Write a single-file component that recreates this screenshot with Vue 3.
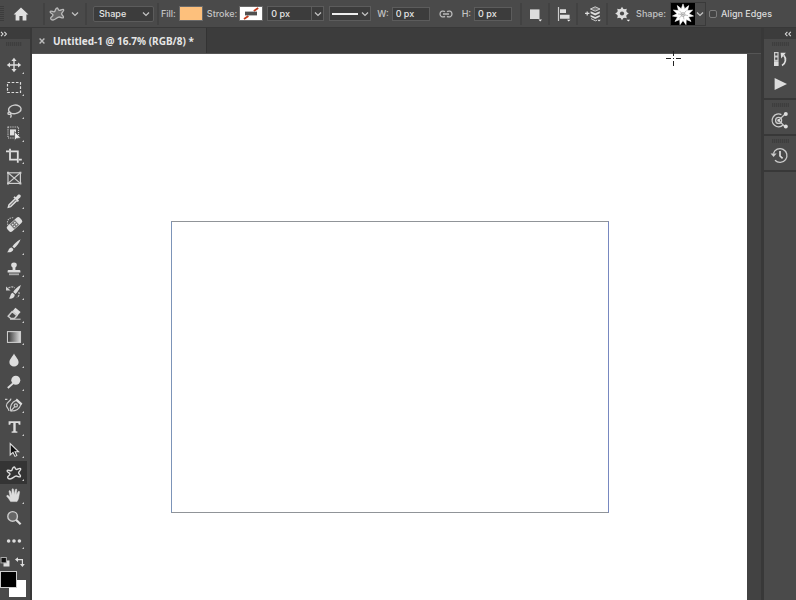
<script setup>
import { ref } from 'vue'

const burst = (cx, cy, n, outer, inner) => {
  const pts = []
  for (let i = 0; i < n * 2; i++) {
    const r = i % 2 ? inner : outer
    const a = (Math.PI * i) / n - Math.PI / 2
    pts.push(`${(cx + r * Math.cos(a)).toFixed(2)},${(cy + r * Math.sin(a)).toFixed(2)}`)
  }
  return pts.join(' ')
}

const blob = 'M5.8 5.4 C6.6 3.4 6.8 1.8 8.2 2 C9.4 2.2 9 4 10.2 4.4 C11.6 4.8 13.4 2.6 14.6 3.6 C15.6 4.8 12.6 6.4 12.6 7.8 C12.6 9.2 15.2 10.2 14.4 11.6 C13.6 12.8 11.6 10.8 10 11 C8 11.2 6.6 14 4 14 C1.4 14 1 12 2.6 10.8 C3.8 9.8 4.4 9 3.6 8.2 C2.8 7.4 .6 7 1.2 5.6 C1.8 4.2 5 6.8 5.8 5.4 Z'

const tools = [
  { name: 'Move', more: true, body: '<g stroke="#ddd" stroke-width="1.4" fill="none"><path d="M8 3V13M3 8H13"/></g><g fill="#ddd"><path d="M8 .8 10.6 4H5.4ZM8 15.2 10.6 12H5.4ZM.8 8 4 5.4V10.6ZM15.2 8 12 5.4V10.6Z"/></g>' },
  { name: 'Marquee', more: true, body: '<rect x="1.5" y="2.5" width="13" height="10" fill="none" stroke="#ddd" stroke-width="1.2" stroke-dasharray="2.6 1.6"/>' },
  { name: 'Lasso', more: true, body: '<g fill="none" stroke="#ccc" stroke-width="1.4"><ellipse cx="8.8" cy="6.4" rx="6.3" ry="4.3" transform="rotate(-8 8.8 6.4)"/><path d="M3.4 9C1.4 9.4 1.6 11.6 3.4 11.4 5.2 11.2 5 9.4 3.4 9M4.4 11.2C5.6 12 5.2 13.6 4.4 14.6"/></g>' },
  { name: 'Object Selection', more: true, body: '<rect x="2" y="2" width="10.5" height="11" fill="none" stroke="#ccc" stroke-width="1.1" stroke-dasharray="1.2 1"/><rect x="4" y="4.4" width="6" height="6" fill="#ddd"/><path d="M8.6 6.6V15.4L10.6 13.4 14.8 13Z" fill="#eee" stroke="#4a4a4a" stroke-width=".7"/>' },
  { name: 'Crop', more: true, body: '<g fill="none" stroke="#ddd" stroke-width="1.8"><path d="M4 .8V11.6H12M0 3.4H3M5 3.4H11.8V14.8M13 11.6H15.8"/></g>' },
  { name: 'Frame', more: false, body: '<g fill="none" stroke="#ccc" stroke-width="1.2"><rect x="2" y="2.8" width="12.4" height="10.6"/><path d="M2 2.8 14.4 13.4M14.4 2.8 2 13.4"/></g><g fill="#ccc"><path d="M1 1.8h2v2H1zM13.4 1.8h2v2h-2zM1 12.4h2v2H1zM13.4 12.4h2v2h-2z"/></g>' },
  { name: 'Eyedropper', more: true, body: '<path d="M9 6 3 12 2.4 14.2 4.6 13.6 10.6 7.6" fill="none" stroke="#ddd" stroke-width="1.5"/><path d="M7.4 4.4 8.6 3.2 9.8 4.2 12 1.8C13.8.6 15.6 2.4 14.4 4.2L12 6.6 13 7.8 11.8 9Z" fill="#ddd"/>' },
  { name: 'Healing Brush', more: true, body: '<path d="M2 9C-.2 4 4.4.6 8 2" fill="none" stroke="#bbb" stroke-width="1.1" stroke-dasharray="1.4 1"/><g transform="rotate(-42 8.5 8.5)"><rect x="0" y="4.9" width="17" height="7.2" rx="2.4" fill="#ddd"/><rect x="5.2" y="5.4" width="6.6" height="6.2" fill="#777"/><path d="M6.4 6.8h1.4v1.2H6.4zM9.2 6.8h1.4v1.2H9.2zM6.4 9.2h1.4v1.2H6.4zM9.2 9.2h1.4v1.2H9.2z" fill="#eee"/></g>' },
  { name: 'Brush', more: true, body: '<path d="M14.6 1.2C11.4 2.8 7.6 6.4 6.4 8.6L8.2 10.2C10.6 8.2 13.6 4.6 14.6 1.2Z" fill="#ddd"/><path d="M5.6 9.4 7.4 11C7.2 13.6 4 14.8 1 14.2 2.8 13.2 2.4 9.6 5.6 9.4Z" fill="#ddd"/>' },
  { name: 'Clone Stamp', more: true, body: '<path d="M8 1.6C11.6 1.6 11.4 5.4 9.4 6.6V9H13.4Q14.4 9 14.4 10V11.6H1.6V10Q1.6 9 2.6 9H6.6V6.6C4.6 5.4 4.4 1.6 8 1.6Z" fill="#ddd"/><rect x="3" y="12.4" width="10" height="1.8" fill="#aaa"/>' },
  { name: 'History Brush', more: true, body: '<path d="M14.8 1C11.4 2.6 8.8 5.6 7.2 8L9.6 10C12 7.4 14.2 4.6 14.8 1ZM6.6 8.8 8.8 10.8C8.6 14 6 15 2.8 14.6 4.8 13 4 9.8 6.6 8.8Z" fill="#ddd"/><path d="M0 2.4 4.6 6.6H0Z" fill="#ccc"/><path d="M2.4 4C5 2.4 7.4 2.6 8.6 4M12.8 8C13.8 10.4 12.6 12.6 10.8 13.6" fill="none" stroke="#bbb" stroke-width="1.2" stroke-dasharray="2 1"/>' },
  { name: 'Eraser', more: true, body: '<path d="M9.4 1.8 14.6 6 11.6 9.4 6.4 5.2Z" fill="#ddd"/><path d="M6.2 5.6 11 9.6 8.4 12.6H5L2.2 10.2Z" fill="none" stroke="#ccc" stroke-width="1.5"/><path d="M4 13.2H14.6" stroke="#ccc" stroke-width="1.1"/>' },
  { name: 'Gradient', more: true, body: '<defs><linearGradient id="ramp"><stop offset="0" stop-color="#333"/><stop offset="1" stop-color="#ddd"/></linearGradient></defs><rect x="1.5" y="2.6" width="13" height="10.8" fill="url(#ramp)" stroke="#ccc" stroke-width="1.1"/>' },
  { name: 'Blur', more: true, body: '<path d="M8 1.4C9.4 4.6 12.6 7 12.6 10.2A4.6 4.4 0 0 1 3.4 10.2C3.4 7 6.6 4.6 8 1.4Z" fill="#ddd"/>' },
  { name: 'Dodge', more: true, body: '<circle cx="9.8" cy="6.2" r="4.5" fill="#ddd"/><path d="M7 9.4 1.8 14" stroke="#ddd" stroke-width="1.9"/>' },
  { name: 'Curvature Pen', more: true, body: '<g fill="none" stroke="#ccc" stroke-width="1.2"><path d="M-1 2.4H1.4M5 1.6C4.6 4.6-.2 5.4.4 8.6.8 11 2.8 11.4 3 14"/><path d="M4.8 14C3.4 9.6 5.8 4.8 10.2 3.4L14.8 7.6C13.6 11.4 10 14.2 4.8 14Z"/><path d="M4.8 14 9.2 9.2"/><circle cx="9.8" cy="8.4" r="1.6"/></g><path d="M10.8 1.6 16.4 6.6 15.2 8.2 9.6 3.2Z" fill="#ddd"/>' },
  { name: 'Type', more: true, body: '<path d="M2.6 2.2H14.4V5.8H12.8L12.2 4H9.7V12.2L11.4 12.6V13.8H5.6V12.6L7.3 12.2V4H4.8L4.2 5.8H2.6Z" fill="#ddd"/>' },
  { name: 'Path Selection', more: true, body: '<path d="M4.2 1.6V13L7 10.4 9 14.4 10.8 13.6 9 9.8H12.6Z" fill="#111" stroke="#ddd" stroke-width="1.1"/>' },
  { name: 'Custom Shape', more: true, active: true, body: `<path d="${blob}" fill="none" stroke="#ddd" stroke-width="1.4"/>` },
  { name: 'Hand', more: true, body: '<path d="M4.6 14.6C3.6 12.6 2 10.8.8 9.4.4 8.6 1.4 8 2.2 8.6L4.2 10.2 3 4.4C3 3.4 4.2 3.4 4.6 4.2L6 8 6 2.4C6.2 1.4 7.4 1.4 7.6 2.4L8.2 7.6 9.4 2.6C9.8 1.6 11 2 10.8 3L10.4 8 12.2 4.6C12.8 3.8 13.8 4.4 13.6 5.2L12.6 11C12.2 12.8 11.4 14 11 14.6Z" fill="#ddd" stroke="#ddd" stroke-width=".5"/>' },
  { name: 'Zoom', more: false, body: '<circle cx="6.6" cy="6.4" r="4.8" fill="#666" stroke="#ccc" stroke-width="1.4"/><path d="M10 9.8 14.6 14.2" stroke="#ddd" stroke-width="2.2"/>' },
  { name: 'More Tools', more: true, body: '<g fill="#ddd"><circle cx="2.6" cy="8" r="1.8"/><circle cx="8" cy="8" r="1.8"/><circle cx="13.4" cy="8" r="1.8"/></g>' },
]

const docks = [
  [
    { name: 'Learn', body: '<g fill="none" stroke="#ccc" stroke-width="1.2"><path d="M2.6 1.6h3.4v3.4H2.6zM2.6 6h3.4v3.4H2.6z"/></g><rect x="2" y="10.2" width="4.6" height="4.8" fill="#ddd"/><path d="M10 14.4C13.8 12.4 14.6 7.6 11.8 4.4" fill="none" stroke="#ddd" stroke-width="1.7"/><path d="M8.6 1.8H13.8L9.2 7.4Z" fill="#ddd"/>' },
    { name: 'Actions', body: '<path d="M2.6 2 15 8 2.6 14Z" fill="#ddd"/>' },
  ],
  [
    { name: 'Share', body: '<g fill="none" stroke="#ccc" stroke-width="1.3"><path d="M11 13A6.4 6.4 0 1 1 9.4 2.6"/><circle cx="6.6" cy="8.4" r="3"/><path d="M6.6 8.4 13.4 1.8M6.6 8.4 13.4 15"/></g><g fill="#ddd"><circle cx="6.6" cy="8.4" r="1.3"/><circle cx="13.8" cy="1.9" r="2"/><circle cx="13.8" cy="14.4" r="2"/></g>' },
  ],
  [
    { name: 'History', body: '<path d="M1.4 5.6A6.9 6.9 0 1 1 3 12.2" fill="none" stroke="#ccc" stroke-width="1.3"/><path d="M-1.4 5.4H4.6L1.6 9Z" fill="#ccc"/><path d="M8 3V8L10.6 10.4" fill="none" stroke="#ddd" stroke-width="1.7"/>' },
  ],
]

const width = ref('0 px')
const height = ref('0 px')
const stroke = ref('0 px')
const alignEdges = ref(false)
</script>

<template>
  <div class="app">
    <header class="options">
      <span class="grip"></span>
      <button class="home" aria-label="Home">
        <svg width="16" height="16" viewBox="0 0 16 16"><path d="M8 1.4 15.4 8.4H13.4V14.6H9.6V10H6.4V14.6H2.6V8.4H.6Z" fill="#e0e0e0" /></svg>
      </button>
      <i class="rule"></i>
      <button class="preset" aria-label="Tool preset">
        <svg width="18" height="16" viewBox="0 0 16 16"><path :d="blob" fill="#666" stroke="#bbb" stroke-width="1.3" /></svg>
        <svg class="chev" width="8" height="6" viewBox="0 0 8 6"><path d="M1 1.5 4 4.5 7 1.5" /></svg>
      </button>
      <i class="rule"></i>
      <span class="select">
        <select aria-label="Tool mode"><option>Shape</option></select>
        <svg class="chev" width="8" height="6" viewBox="0 0 8 6"><path d="M1 1.5 4 4.5 7 1.5" /></svg>
      </span>
      <i class="rule"></i>
      <label for="fill" class="fill-label">Fill:</label>
      <button id="fill" class="swatch fill"></button>
      <label for="stroke-paint" class="stroke-label">Stroke:</label>
      <button id="stroke-paint" class="swatch none">
        <svg width="22" height="13" viewBox="0 0 22 13"><path d="M4 12 8.4 9M13.8 4 18.2 1" stroke="#c33a1c" stroke-width="1.8" /><rect x="5" y="4.6" width="12" height="3.8" fill="#505050" /></svg>
      </button>
      <span class="combo">
        <input v-model="stroke" aria-label="Stroke width" />
        <button aria-label="Stroke width presets"><svg class="chev" width="8" height="6" viewBox="0 0 8 6"><path d="M1 1.5 4 4.5 7 1.5" /></svg></button>
      </span>
      <button class="line" aria-label="Stroke type">
        <i></i>
        <svg class="chev" width="8" height="6" viewBox="0 0 8 6"><path d="M1 1.5 4 4.5 7 1.5" /></svg>
      </button>
      <label for="w" class="w-label">W:</label>
      <input id="w" v-model="width" class="size" />
      <button class="link" aria-label="Link width and height">
        <svg width="14" height="8" viewBox="0 0 14 8"><path d="M6 1.6C4.6.6 1 .8 1 4S4.6 7.4 6 6.4M8 1.6C9.4.6 13 .8 13 4S9.4 7.4 8 6.4M4 4H10" fill="none" stroke="#bbb" stroke-width="1.3" /></svg>
      </button>
      <label for="h">H:</label>
      <input id="h" v-model="height" class="size" />
      <i class="rule"></i>
      <button class="op" aria-label="Path operations">
        <svg width="14" height="16" viewBox="0 0 14 16"><rect x="1" y="3.4" width="9.5" height="9.6" fill="#ddd" /><path d="M9.5 13.5h3.5L11.2 15.4Z" fill="#eee" /></svg>
      </button>
      <i class="rule"></i>
      <button class="op" aria-label="Path alignment">
        <svg width="14" height="16" viewBox="0 0 14 16"><path d="M1.5 1V15" stroke="#ccc" stroke-width="1.2" /><path d="M3 3.2h6v3.8H3zM3 8.8h9.6v4H3z" fill="#ddd" /><path d="M10 13.8h3.5L11.7 15.6Z" fill="#eee" /></svg>
      </button>
      <i class="rule"></i>
      <button class="op" aria-label="Path arrangement">
        <svg width="16" height="16" viewBox="0 0 16 16"><path d="M0 7.4H4.4M2.2 5.4V9.4" stroke="#ddd" stroke-width="1.2" /><path d="M10.2.8 15 3 10.2 5.2 5.4 3Z" fill="#777" stroke="#ccc" /><path d="M5.6 5.2 10.2 7.2 14.8 5.2V7.2L10.2 9.6 5.6 7.2ZM5.6 9 10.2 11 14.8 9V10.8L10.2 13 5.6 10.8Z" fill="#ddd" /><path d="M6 12.6 10.4 14.8 12 14.2" fill="none" stroke="#ccc" /><path d="M12.4 13.8h3.4L14 15.6Z" fill="#eee" /></svg>
      </button>
      <i class="rule"></i>
      <button class="op" aria-label="Settings">
        <svg width="16" height="16" viewBox="0 0 16 16"><polygon :points="burst(7, 7.5, 8, 6.8, 4.4)" fill="#ddd" /><circle cx="7" cy="7.5" r="4.8" fill="#ddd" /><circle cx="7" cy="7.5" r="2.1" fill="#4a4a4a" /><path d="M11.6 13.8h3.6L13.4 15.6Z" fill="#eee" /></svg>
      </button>
      <label for="shape">Shape:</label>
      <span class="shape">
        <button id="shape" class="thumb">
          <svg width="24" height="24" viewBox="0 0 24 24"><polygon :points="burst(12, 11.5, 11, 10.6, 6)" fill="#fff" stroke="#fff" stroke-width=".6" stroke-linejoin="round" /><g fill="none" stroke="#999" stroke-width=".6"><path d="M12 11.5 8.4 7.8M12 11.5 15.4 7.6M12 11.5 17 12.6M12 11.5 13 16.4M12 11.5 8.2 15M12 11.5 7 11" /><circle cx="12" cy="11.5" r="2" /></g></svg>
        </button>
        <button class="drop" aria-label="Shape presets"><svg class="chev" width="8" height="6" viewBox="0 0 8 6"><path d="M1 1.5 4 4.5 7 1.5" /></svg></button>
      </span>
      <label class="align"><input v-model="alignEdges" type="checkbox" />Align Edges</label>
    </header>

    <div class="workspace">
      <aside class="tools">
        <button class="collapse" aria-label="Expand tools">
          <svg width="8" height="6" viewBox="0 0 8 6"><path d="M1 .8 3 3 1 5.2M4.4 .8 6.4 3 4.4 5.2" /></svg>
        </button>
        <span class="handle"></span>
        <nav>
          <button v-for="t in tools" :key="t.name" :class="{ active: t.active }" :aria-label="t.name">
            <svg width="16" height="16" viewBox="0 0 16 16" v-html="t.body"></svg>
            <i v-if="t.more" class="corner"></i>
          </button>
        </nav>
        <div class="colors">
          <div class="minis">
            <button aria-label="Default colors"><svg width="10" height="10" viewBox="0 0 10 10"><rect x="3.5" y="3.5" width="6" height="6" fill="#ddd" /><rect x="1" y=".5" width="5.4" height="5.4" fill="#111" stroke="#aaa" /></svg></button>
            <button aria-label="Swap colors"><svg width="10" height="10" viewBox="0 0 10 10"><path d="M2.4 2.6H7.4V7.4" fill="none" stroke="#ddd" stroke-width="1.2" /><path d="M0 2.6 3 .2V5ZM7.4 10 5 7H9.8Z" fill="#ddd" /></svg></button>
          </div>
          <div class="pair">
            <button class="back" aria-label="Background color"></button>
            <button class="front" aria-label="Foreground color"></button>
          </div>
        </div>
      </aside>

      <main class="document">
        <div class="tabs">
          <div class="tab">
            <button aria-label="Close"><svg width="6" height="6" viewBox="0 0 6 6"><path d="M.6 .6 5.4 5.4M5.4 .6 .6 5.4" stroke="#bbb" stroke-width="1.4" /></svg></button>
            <a href="#">Untitled-1 @ 16.7% (RGB/8) *</a>
          </div>
        </div>
        <div class="view">
          <div class="canvas">
            <div class="artboard"></div>
            <svg class="cursor" width="15" height="15" viewBox="0 0 15 15"><path d="M7.5 0V5M7.5 10V15M0 7.5H5M10 7.5H15M7 7.5H8" stroke="#222" /></svg>
          </div>
          <div class="scroll"></div>
        </div>
      </main>

      <aside class="dock">
        <button class="collapse" aria-label="Expand panels">
          <svg width="8" height="6" viewBox="0 0 8 6"><path d="M3.4 .8 1.4 3 3.4 5.2M6.8 .8 4.8 3 6.8 5.2" /></svg>
        </button>
        <section v-for="(group, i) in docks" :key="i">
          <span class="handle"></span>
          <button v-for="p in group" :key="p.name" :aria-label="p.name">
            <svg width="16" height="16" viewBox="0 0 16 16" v-html="p.body"></svg>
          </button>
        </section>
      </aside>
    </div>
  </div>
</template>

<style>
body { background: #4a4a4a; }
</style>

<style scoped>
* { box-sizing: border-box; }
button, input, select { margin: 0; padding: 0; border: 0; background: none; color: inherit; font: inherit; border-radius: 0; outline: 0; }
svg { display: block; flex: none; overflow: visible; }
.app { display: flex; flex-direction: column; min-height: 100vh; color: #dcdcdc; font: 500 9px/14px Inter, "Liberation Sans", sans-serif; overflow: hidden; }

.options { display: flex; align-items: center; height: 28px; background: #4a4a4a; border-bottom: 1px solid #383838; white-space: nowrap; }
.options > * { flex: none; }
.options label { color: #c4c4c4; }
.rule { width: 2px; height: 22px; background: #424242; }
.grip { width: 4px; height: 16px; background: repeating-linear-gradient(#3c3c3c 0 1px, #4a4a4a 1px 2px); }
.home { margin: 0 14px 0 9px; }
.preset { display: flex; align-items: center; gap: 5px; margin: 0 6px 0 3px; }
.chev { fill: none; stroke: #c4c4c4; stroke-width: 1.2; }
.select { display: flex; align-items: center; margin: 0 3px 0 6px; width: 61px; height: 16px; padding-right: 3px; background: #3c3c3c; border: 1px solid #5c5c5c; border-radius: 2px; }
.select select { flex: 1; min-width: 0; padding-left: 5px; appearance: none; color: #e6e6e6; }
.swatch { width: 24px; height: 15px; border: 1px solid #6a6a6a; }
.fill-label { margin-left: 2px; }
.fill { margin-left: 3px; background: #fdc07c; }
.stroke-label { margin-left: 4px; }
.none { margin-left: 2px; background: #fff; }
.combo { display: flex; margin-left: 4px; width: 57px; height: 15px; background: #3c3c3c; border: 1px solid #5c5c5c; }
.combo input { flex: 1; min-width: 0; padding-left: 3px; color: #e6e6e6; }
.combo button { display: grid; place-items: center; width: 12px; border-left: 1px solid #5c5c5c; }
.line { display: flex; align-items: center; gap: 3px; margin-left: 5px; width: 42px; height: 15px; padding-left: 2px; background: #3c3c3c; border: 1px solid #5c5c5c; }
.line i { width: 26px; height: 2px; background: #eee; }
.w-label { margin-left: 6px; }
.size { margin-left: 3px; width: 38px; height: 14px; padding-left: 3px; background: #3c3c3c; border: 1px solid #5c5c5c; color: #e6e6e6; }
.link { margin: 0 9px; }
.size + .rule { margin-left: 8px; }
.op { margin: 0 5px 0 7px; }
.shape { display: flex; margin-left: 4px; height: 24px; border: 1px solid #3a3a3a; }
.thumb { width: 24px; overflow: hidden; background: #000; }
.drop { display: grid; place-items: center; width: 10px; }
.align { display: flex; align-items: center; gap: 4px; margin-left: 3px; }
.options .align { color: #dcdcdc; }
.align input { appearance: none; width: 8px; height: 8px; background: #444; border: 1px solid #7c7c7c; border-radius: 2px; }

.workspace { display: flex; flex: 1; }
.collapse { display: flex; align-items: center; height: 11px; background: #3c3c3c; }
.collapse svg { fill: none; stroke: #ddd; stroke-width: 1.1; }
.handle { height: 4px; background: repeating-linear-gradient(90deg, #3e3e3e 0 1px, #464646 1px 2px); }

.tools { display: flex; flex-direction: column; width: 32px; background: #4a4a4a; border-right: 2px solid #383838; }
.tools .handle { width: 16px; margin: 3px 0 8px 6px; }
.tools nav { display: grid; flex: 1; grid-auto-rows: 1fr; }
.tools nav button { position: relative; display: flex; align-items: center; width: 27px; padding-left: 6px; }
.tools nav .active { background: #343434; }
.corner { position: absolute; right: 3px; bottom: 3px; border: 1px solid #ccc; border-top-color: transparent; border-left-color: transparent; }
.colors { height: 48px; padding-top: 5px; }
.minis { display: flex; gap: 5px; }
.pair { position: relative; margin-top: 4px; height: 26px; }
.pair button { position: absolute; width: 17px; height: 17px; }
.front { left: 0; top: 0; background: #000; border: 1px solid #ccc; }
.back { left: 9px; top: 9px; background: #fff; }

.document { display: flex; flex: 1; flex-direction: column; min-width: 0; }
.tabs { display: flex; height: 26px; background: #3c3c3c; border-bottom: 1px solid #555; }
.tab { display: flex; align-items: center; gap: 8px; padding: 0 12px 0 7px; background: #474747; border-right: 1px solid #333; }
.tab a { color: #e6e6e6; font: 700 10px/14px "Noto Sans", sans-serif; text-decoration: none; white-space: nowrap; }
.view { display: flex; flex: 1; }
.canvas { position: relative; flex: 1; background: #fff; }
.artboard { width: 438px; max-width: 100%; height: 292px; margin: 167px auto 0; border: 1px solid #909498; border-left-color: #7c94b8; border-right-color: #7888c0; }
.cursor { position: absolute; right: 66px; top: -3px; }
.scroll { width: 14px; background: #424242; }

.dock { display: flex; flex-direction: column; width: 35px; background: #4a4a4a; border-left: 3px solid #383838; }
.dock .collapse { justify-content: flex-end; padding-right: 4px; }
.dock section { display: flex; flex-direction: column; align-items: center; padding: 3px 0 2px; border-bottom: 2px solid #383838; }
.dock .handle { width: 17px; }
.dock section button { display: grid; place-items: center; width: 100%; height: 25px; }
</style>
